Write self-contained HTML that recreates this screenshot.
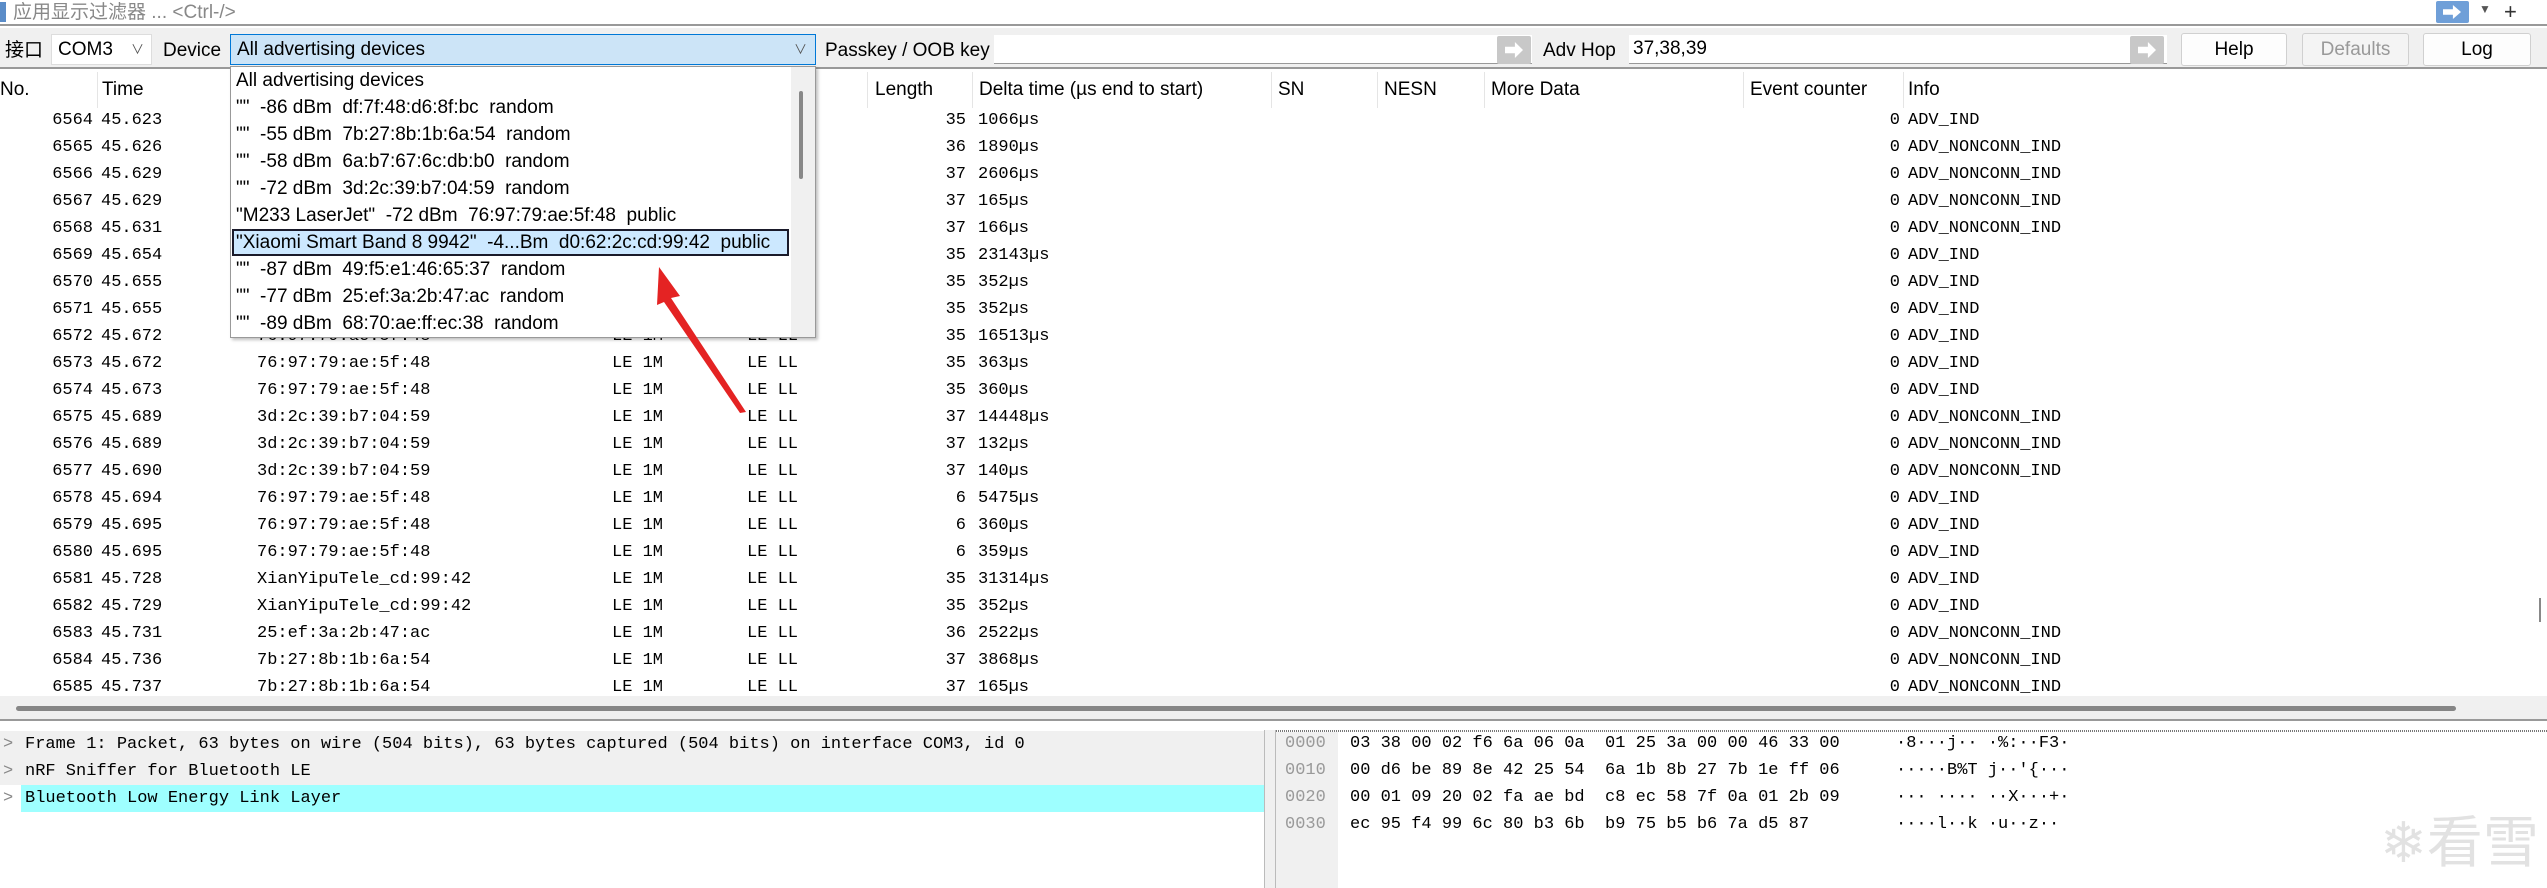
<!DOCTYPE html>
<html><head><meta charset="utf-8"><style>
*{margin:0;padding:0;box-sizing:border-box}
body{width:2547px;height:888px;overflow:hidden;background:#fff;position:relative;font-family:"Liberation Sans","Noto Sans CJK SC",sans-serif;font-size:19px;color:#000}
.a{position:absolute;white-space:pre}
.m{font-family:"Liberation Mono","Noto Sans CJK SC",monospace;font-size:17px}
.r{position:absolute;left:0;width:2547px;height:27px;line-height:27px}
.r span{position:absolute;top:0;white-space:pre}
.n{left:0;width:93px;text-align:right}.t{left:101px}.s{left:257px}.p{left:612px}.pr{left:747px}
.l{left:900px;width:66px;text-align:right}.d{left:978px}.e{left:1850px;width:50px;text-align:right}.i{left:1908px}
.hd{position:absolute;top:72px;height:36px;line-height:36px;font-size:19px}
.sep{position:absolute;top:72px;width:1px;height:36px;background:#e5e5e5}
.btn{position:absolute;top:33px;height:33px;border:1px solid #d0d0d0;border-radius:3px;background:#fdfdfd;text-align:center;line-height:31px}
.arr{position:absolute;width:34px;height:28px;background:#c8c8c8;border-radius:2px}
.arr:after{content:"";position:absolute;left:8px;top:6px;width:18px;height:16px;background:#fff;clip-path:polygon(0 30%,55% 30%,55% 0,100% 50%,55% 100%,55% 70%,0 70%)}
.dd{position:absolute;left:230px;top:66px;width:586px;height:272px;background:#fff;border:1px solid #999;box-shadow:2px 2px 3px rgba(0,0,0,.25)}
.di{position:absolute;left:5px;height:27px;line-height:27px;white-space:pre;font-size:19px}
.hx{position:absolute;height:27px;line-height:27px;white-space:pre}
</style></head><body>
<!-- filter bar -->
<div class="a" style="left:0;top:0;width:2547px;height:26px;background:#fff;border-bottom:2px solid #999"></div>
<div class="a" style="left:0;top:2px;width:6px;height:20px;background:#5a8cc8"></div>
<div class="a" style="left:13px;top:1px;font-size:19px;color:#888;line-height:24px">应用显示过滤器 ... &lt;Ctrl-/&gt;</div>
<div class="a" style="left:2436px;top:1px;width:33px;height:22px;background:#6f9fd8;border-radius:2px"></div>
<div class="a" style="left:2443px;top:5px;width:18px;height:14px;background:#fff;clip-path:polygon(0 30%,55% 30%,55% 0,100% 50%,55% 100%,55% 70%,0 70%)"></div>
<div class="a" style="left:2479px;top:2px;font-size:12px;color:#555">▼</div>
<div class="a" style="left:2504px;top:0;font-size:22px;color:#333;line-height:24px">+</div>
<!-- toolbar -->
<div class="a" style="left:0;top:28px;width:2547px;height:41px;background:#f0f0f0;border-bottom:2px solid #999"></div>
<div class="a" style="left:5px;top:36px;line-height:30px">接口</div>
<div class="a" style="left:51px;top:34px;width:101px;height:31px;background:#fff;border:1px solid #ddd;line-height:29px;padding-left:6px">COM3<span style="position:absolute;right:7px;font-size:13px;color:#555">∨</span></div>
<div class="a" style="left:163px;top:36px;line-height:30px">Device</div>
<div class="a" style="left:230px;top:34px;width:586px;height:31px;background:#cce4f7;border:1px solid #0078d7;line-height:29px;padding-left:6px">All advertising devices<span style="position:absolute;right:8px;font-size:13px;color:#555">∨</span></div>
<div class="a" style="left:825px;top:36px;line-height:30px">Passkey / OOB key</div>
<div class="a" style="left:994px;top:35px;width:538px;height:29px;background:#fff;border-bottom:1px solid #999"></div>
<div class="arr" style="left:1497px;top:36px"></div>
<div class="a" style="left:1543px;top:36px;line-height:30px">Adv Hop</div>
<div class="a" style="left:1629px;top:35px;width:538px;height:29px;background:#fff;border-bottom:1px solid #999;line-height:27px;padding-left:4px">37,38,39</div>
<div class="arr" style="left:2130px;top:36px"></div>
<div class="btn" style="left:2181px;width:106px">Help</div>
<div class="btn" style="left:2302px;width:107px;color:#999;background:#f4f4f4">Defaults</div>
<div class="btn" style="left:2423px;width:108px">Log</div>
<!-- header -->
<div class="hd" style="left:0">No.</div>
<div class="sep" style="left:97px"></div><div class="hd" style="left:102px">Time</div>
<div class="sep" style="left:240px"></div><div class="hd" style="left:247px">Source</div>
<div class="sep" style="left:600px"></div><div class="hd" style="left:607px">PHY</div>
<div class="sep" style="left:740px"></div><div class="hd" style="left:745px">Protocol</div>
<div class="sep" style="left:867px"></div><div class="hd" style="left:875px">Length</div>
<div class="sep" style="left:972px"></div><div class="hd" style="left:979px">Delta time (µs end to start)</div>
<div class="sep" style="left:1271px"></div><div class="hd" style="left:1278px">SN</div>
<div class="sep" style="left:1377px"></div><div class="hd" style="left:1384px">NESN</div>
<div class="sep" style="left:1484px"></div><div class="hd" style="left:1491px">More Data</div>
<div class="sep" style="left:1743px"></div><div class="hd" style="left:1750px">Event counter</div>
<div class="sep" style="left:1903px"></div><div class="hd" style="left:1908px">Info</div>
<!-- rows -->
<div class="m">
<div class="r" style="top:107px"><span class="n">6564</span><span class="t">45.623</span><span class="s">76:97:79:ae:5f:48</span><span class="p">LE 1M</span><span class="pr">LE LL</span><span class="l">35</span><span class="d">1066µs</span><span class="e">0</span><span class="i">ADV_IND</span></div>
<div class="r" style="top:134px"><span class="n">6565</span><span class="t">45.626</span><span class="s">25:ef:3a:2b:47:ac</span><span class="p">LE 1M</span><span class="pr">LE LL</span><span class="l">36</span><span class="d">1890µs</span><span class="e">0</span><span class="i">ADV_NONCONN_IND</span></div>
<div class="r" style="top:161px"><span class="n">6566</span><span class="t">45.629</span><span class="s">7b:27:8b:1b:6a:54</span><span class="p">LE 1M</span><span class="pr">LE LL</span><span class="l">37</span><span class="d">2606µs</span><span class="e">0</span><span class="i">ADV_NONCONN_IND</span></div>
<div class="r" style="top:188px"><span class="n">6567</span><span class="t">45.629</span><span class="s">7b:27:8b:1b:6a:54</span><span class="p">LE 1M</span><span class="pr">LE LL</span><span class="l">37</span><span class="d">165µs</span><span class="e">0</span><span class="i">ADV_NONCONN_IND</span></div>
<div class="r" style="top:215px"><span class="n">6568</span><span class="t">45.631</span><span class="s">7b:27:8b:1b:6a:54</span><span class="p">LE 1M</span><span class="pr">LE LL</span><span class="l">37</span><span class="d">166µs</span><span class="e">0</span><span class="i">ADV_NONCONN_IND</span></div>
<div class="r" style="top:242px"><span class="n">6569</span><span class="t">45.654</span><span class="s">76:97:79:ae:5f:48</span><span class="p">LE 1M</span><span class="pr">LE LL</span><span class="l">35</span><span class="d">23143µs</span><span class="e">0</span><span class="i">ADV_IND</span></div>
<div class="r" style="top:269px"><span class="n">6570</span><span class="t">45.655</span><span class="s">76:97:79:ae:5f:48</span><span class="p">LE 1M</span><span class="pr">LE LL</span><span class="l">35</span><span class="d">352µs</span><span class="e">0</span><span class="i">ADV_IND</span></div>
<div class="r" style="top:296px"><span class="n">6571</span><span class="t">45.655</span><span class="s">76:97:79:ae:5f:48</span><span class="p">LE 1M</span><span class="pr">LE LL</span><span class="l">35</span><span class="d">352µs</span><span class="e">0</span><span class="i">ADV_IND</span></div>
<div class="r" style="top:323px"><span class="n">6572</span><span class="t">45.672</span><span class="s">76:97:79:ae:5f:48</span><span class="p">LE 1M</span><span class="pr">LE LL</span><span class="l">35</span><span class="d">16513µs</span><span class="e">0</span><span class="i">ADV_IND</span></div>
<div class="r" style="top:350px"><span class="n">6573</span><span class="t">45.672</span><span class="s">76:97:79:ae:5f:48</span><span class="p">LE 1M</span><span class="pr">LE LL</span><span class="l">35</span><span class="d">363µs</span><span class="e">0</span><span class="i">ADV_IND</span></div>
<div class="r" style="top:377px"><span class="n">6574</span><span class="t">45.673</span><span class="s">76:97:79:ae:5f:48</span><span class="p">LE 1M</span><span class="pr">LE LL</span><span class="l">35</span><span class="d">360µs</span><span class="e">0</span><span class="i">ADV_IND</span></div>
<div class="r" style="top:404px"><span class="n">6575</span><span class="t">45.689</span><span class="s">3d:2c:39:b7:04:59</span><span class="p">LE 1M</span><span class="pr">LE LL</span><span class="l">37</span><span class="d">14448µs</span><span class="e">0</span><span class="i">ADV_NONCONN_IND</span></div>
<div class="r" style="top:431px"><span class="n">6576</span><span class="t">45.689</span><span class="s">3d:2c:39:b7:04:59</span><span class="p">LE 1M</span><span class="pr">LE LL</span><span class="l">37</span><span class="d">132µs</span><span class="e">0</span><span class="i">ADV_NONCONN_IND</span></div>
<div class="r" style="top:458px"><span class="n">6577</span><span class="t">45.690</span><span class="s">3d:2c:39:b7:04:59</span><span class="p">LE 1M</span><span class="pr">LE LL</span><span class="l">37</span><span class="d">140µs</span><span class="e">0</span><span class="i">ADV_NONCONN_IND</span></div>
<div class="r" style="top:485px"><span class="n">6578</span><span class="t">45.694</span><span class="s">76:97:79:ae:5f:48</span><span class="p">LE 1M</span><span class="pr">LE LL</span><span class="l">6</span><span class="d">5475µs</span><span class="e">0</span><span class="i">ADV_IND</span></div>
<div class="r" style="top:512px"><span class="n">6579</span><span class="t">45.695</span><span class="s">76:97:79:ae:5f:48</span><span class="p">LE 1M</span><span class="pr">LE LL</span><span class="l">6</span><span class="d">360µs</span><span class="e">0</span><span class="i">ADV_IND</span></div>
<div class="r" style="top:539px"><span class="n">6580</span><span class="t">45.695</span><span class="s">76:97:79:ae:5f:48</span><span class="p">LE 1M</span><span class="pr">LE LL</span><span class="l">6</span><span class="d">359µs</span><span class="e">0</span><span class="i">ADV_IND</span></div>
<div class="r" style="top:566px"><span class="n">6581</span><span class="t">45.728</span><span class="s">XianYipuTele_cd:99:42</span><span class="p">LE 1M</span><span class="pr">LE LL</span><span class="l">35</span><span class="d">31314µs</span><span class="e">0</span><span class="i">ADV_IND</span></div>
<div class="r" style="top:593px"><span class="n">6582</span><span class="t">45.729</span><span class="s">XianYipuTele_cd:99:42</span><span class="p">LE 1M</span><span class="pr">LE LL</span><span class="l">35</span><span class="d">352µs</span><span class="e">0</span><span class="i">ADV_IND</span></div>
<div class="r" style="top:620px"><span class="n">6583</span><span class="t">45.731</span><span class="s">25:ef:3a:2b:47:ac</span><span class="p">LE 1M</span><span class="pr">LE LL</span><span class="l">36</span><span class="d">2522µs</span><span class="e">0</span><span class="i">ADV_NONCONN_IND</span></div>
<div class="r" style="top:647px"><span class="n">6584</span><span class="t">45.736</span><span class="s">7b:27:8b:1b:6a:54</span><span class="p">LE 1M</span><span class="pr">LE LL</span><span class="l">37</span><span class="d">3868µs</span><span class="e">0</span><span class="i">ADV_NONCONN_IND</span></div>
<div class="r" style="top:674px"><span class="n">6585</span><span class="t">45.737</span><span class="s">7b:27:8b:1b:6a:54</span><span class="p">LE 1M</span><span class="pr">LE LL</span><span class="l">37</span><span class="d">165µs</span><span class="e">0</span><span class="i">ADV_NONCONN_IND</span></div>
</div>
<div class="a" style="left:2539px;top:598px;width:2px;height:24px;background:#888"></div>
<!-- h scrollbar -->
<div class="a" style="left:0;top:696px;width:2547px;height:25px;background:#f0f0f0;border-bottom:2px solid #999"></div>
<div class="a" style="left:16px;top:706px;width:2440px;height:5px;background:#868686;border-radius:3px"></div>
<!-- details pane -->
<div class="a" style="left:0;top:731px;width:1264px;height:54px;background:#f0f0f0"></div>
<div class="a" style="left:21px;top:785px;width:1243px;height:27px;background:#9effff"></div>
<div class="a m" style="left:3px;top:731px;line-height:27px;color:#888">&gt;<br>&gt;<br>&gt;</div>
<div class="a m" style="left:25px;top:731px;line-height:27px">Frame 1: Packet, 63 bytes on wire (504 bits), 63 bytes captured (504 bits) on interface COM3, id 0<br>nRF Sniffer for Bluetooth LE<br>Bluetooth Low Energy Link Layer</div>
<div class="a" style="left:1264px;top:730px;width:12px;height:158px;background:#f0f0f0;border-left:1px solid #bbb;border-right:1px solid #bbb"></div>
<div class="a" style="left:1276px;top:730px;width:1271px;height:2px;background:repeating-linear-gradient(90deg,#777 0 1px,#fff 1px 2px)"></div>
<div class="a" style="left:1276px;top:732px;width:62px;height:156px;background:#f0f0f0"></div>
<div class="a m" style="left:1285px;top:730px;line-height:27px;color:#999">0000<br>0010<br>0020<br>0030</div>
<div class="a m" style="left:1350px;top:730px;line-height:27px">03 38 00 02 f6 6a 06 0a  01 25 3a 00 00 46 33 00<br>00 d6 be 89 8e 42 25 54  6a 1b 8b 27 7b 1e ff 06<br>00 01 09 20 02 fa ae bd  c8 ec 58 7f 0a 01 2b 09<br>ec 95 f4 99 6c 80 b3 6b  b9 75 b5 b6 7a d5 87</div>
<div class="a m" style="left:1896px;top:730px;line-height:27px">·8···j·· ·%:··F3·<br>·····B%T j··'{···<br>··· ···· ··X···+·<br>····l··k ·u··z··</div>
<!-- watermark -->
<div class="a" style="left:2380px;top:808px;font-size:56px;color:#e2e2e2;line-height:62px;font-family:'Noto Sans CJK SC',sans-serif">❄看雪</div>
<!-- dropdown -->
<div class="dd">
<div class="di" style="top:0">All advertising devices</div>
<div class="di" style="top:27px">""  -86 dBm  df:7f:48:d6:8f:bc  random</div>
<div class="di" style="top:54px">""  -55 dBm  7b:27:8b:1b:6a:54  random</div>
<div class="di" style="top:81px">""  -58 dBm  6a:b7:67:6c:db:b0  random</div>
<div class="di" style="top:108px">""  -72 dBm  3d:2c:39:b7:04:59  random</div>
<div class="di" style="top:135px">"M233 LaserJet"  -72 dBm  76:97:79:ae:5f:48  public</div>
<div class="a" style="left:1px;top:162px;width:557px;height:27px;background:#cce8ff;border:2px solid #1a1a2a"></div>
<div class="di" style="top:162px">"Xiaomi Smart Band 8 9942"  -4...Bm  d0:62:2c:cd:99:42  public</div>
<div class="di" style="top:189px">""  -87 dBm  49:f5:e1:46:65:37  random</div>
<div class="di" style="top:216px">""  -77 dBm  25:ef:3a:2b:47:ac  random</div>
<div class="di" style="top:243px">""  -89 dBm  68:70:ae:ff:ec:38  random</div>
<div class="a" style="left:560px;top:0;width:24px;height:270px;background:#f0f0f0"></div>
<div class="a" style="left:568px;top:24px;width:4px;height:88px;background:#888;border-radius:2px"></div>
</div>
<!-- red arrow -->
<svg class="a" style="left:0;top:0" width="2547" height="888"><polygon points="659,267 680,296 671,298 746,412 740,413 664,302 657,305" fill="#e42323"/></svg>
</body></html>
